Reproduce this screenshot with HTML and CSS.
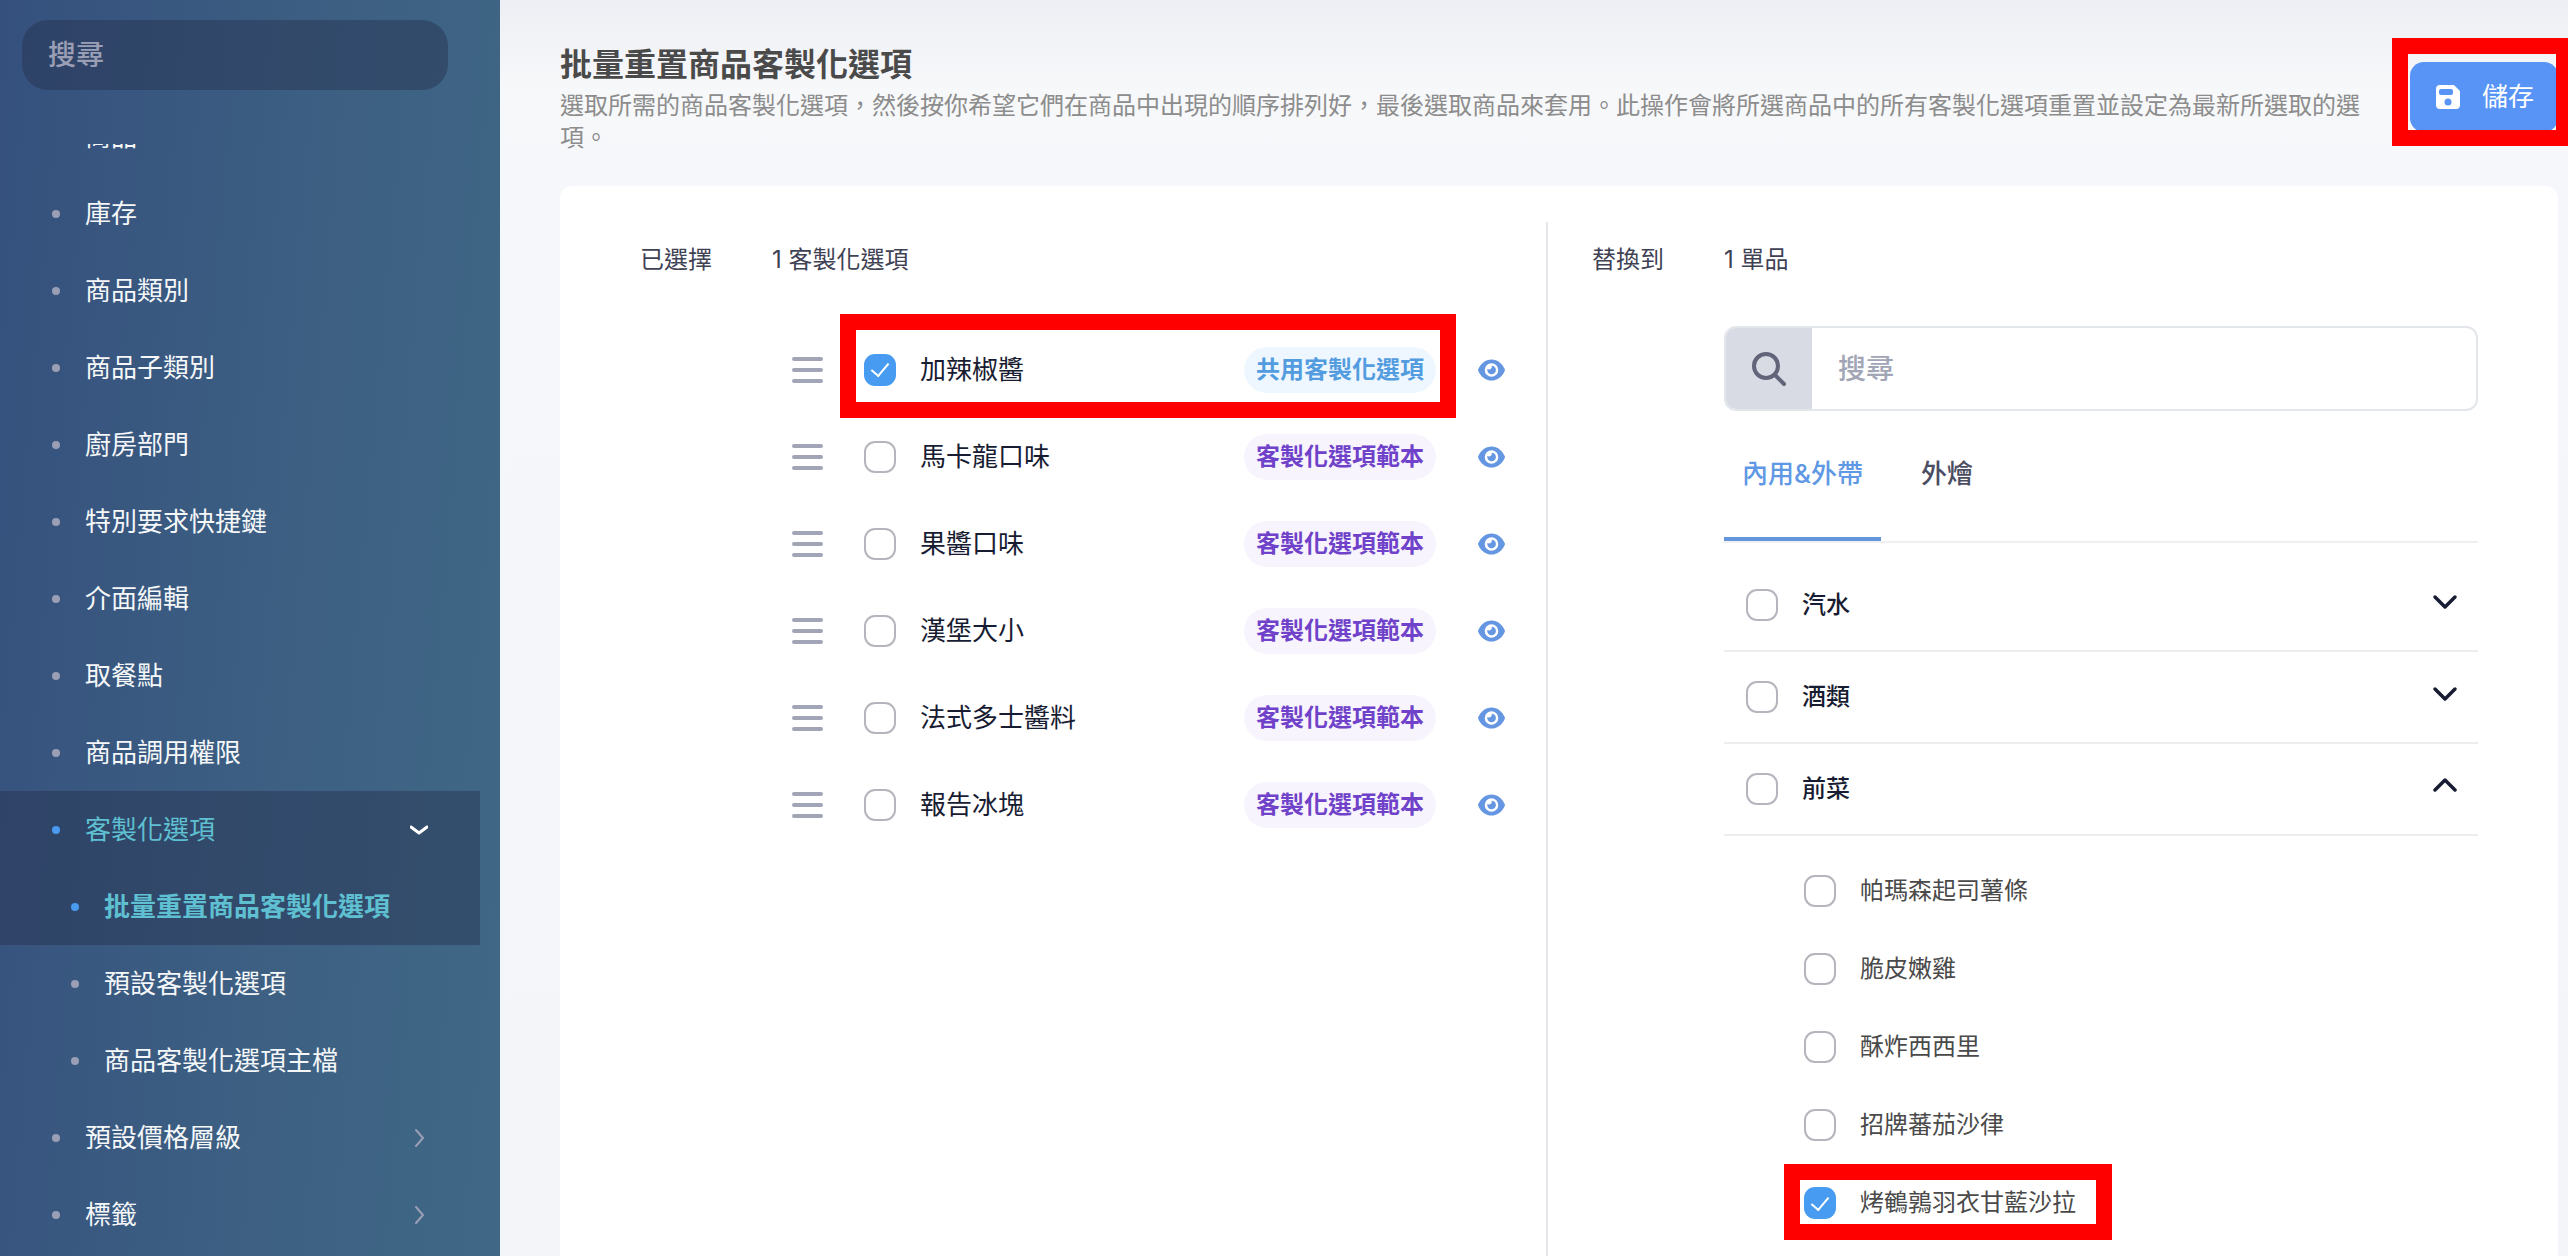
FILE: index.html
```html
<!DOCTYPE html>
<html lang="zh-Hant">
<head>
<meta charset="utf-8">
<meta name="viewport" content="width=device-width, initial-scale=1">
<title>批量重置商品客製化選項</title>
<link rel="stylesheet" href="styles.css">
</head>
<body>
<svg class="sprite" aria-hidden="true">
  <symbol id="eye" viewBox="0 0 27 22"><path fill-rule="evenodd" d="M13.500 0.500C7.500 0.500 2.600 4.700 0.300 10.100a2 2 0 0 0 0 1.800C2.600 17.300 7.500 21.500 13.500 21.500s10.900-4.200 13.200-9.600a2 2 0 0 0 0-1.800C24.400 4.700 19.500 0.500 13.500 0.500zM13.500 4.200a6.800 6.800 0 1 1 0 13.600a6.800 6.800 0 0 1 0-13.600zM13.500 6.700c.5.900.4 2-.3 2.800c-.9 1-2.600 1.300-3.800.6a4.300 4.300 0 1 0 4.100-3.400z"/></symbol>
  <symbol id="grip" viewBox="0 0 31 26"><path d="M2 2h27M2 13h27M2 24h27" fill="none" stroke="currentColor" stroke-width="4" stroke-linecap="round"/></symbol>
  <symbol id="down" viewBox="0 0 26 16"><path d="M3 3l10 10L23 3" fill="none" stroke="currentColor" stroke-width="3.500" stroke-linecap="round" stroke-linejoin="round"/></symbol>
  <symbol id="up" viewBox="0 0 26 16"><path d="M3 12L13 2l10 10" fill="none" stroke="currentColor" stroke-width="3.500" stroke-linecap="round" stroke-linejoin="round"/></symbol>
  <symbol id="next" viewBox="0 0 18 20"><path d="M6 2l7 8-7 8" fill="none" stroke="currentColor" stroke-width="2" stroke-linecap="round" stroke-linejoin="round"/></symbol>
</svg>
<div class="app">
  <aside class="sidebar">
    <input class="sidebar-search" type="search" placeholder="搜尋" aria-label="搜尋選單">
    <nav class="nav">
      <ul class="nav-list">
        <li><a class="nav-item" href="#">商品</a></li>
        <li><a class="nav-item" href="#">庫存</a></li>
        <li><a class="nav-item" href="#">商品類別</a></li>
        <li><a class="nav-item" href="#">商品子類別</a></li>
        <li><a class="nav-item" href="#">廚房部門</a></li>
        <li><a class="nav-item" href="#">特別要求快捷鍵</a></li>
        <li><a class="nav-item" href="#">介面編輯</a></li>
        <li><a class="nav-item" href="#">取餐點</a></li>
        <li><a class="nav-item" href="#">商品調用權限</a></li>
        <li>
          <a class="nav-item active" href="#">客製化選項<svg class="nav-arrow open" viewBox="0 0 18 20"><path d="M1 7l8 6 8-6" fill="none" stroke="currentColor" stroke-width="3" stroke-linecap="round" stroke-linejoin="round"/></svg></a>
          <ul class="nav-sub">
            <li><a class="nav-item sub active current" href="#">批量重置商品客製化選項</a></li>
            <li><a class="nav-item sub" href="#">預設客製化選項</a></li>
            <li><a class="nav-item sub" href="#">商品客製化選項主檔</a></li>
          </ul>
        </li>
        <li><a class="nav-item" href="#">預設價格層級<svg class="nav-arrow"><use href="#next"/></svg></a></li>
        <li><a class="nav-item" href="#">標籤<svg class="nav-arrow"><use href="#next"/></svg></a></li>
      </ul>
    </nav>
  </aside>

  <main class="main">
    <header class="page-head">
      <div class="page-intro">
        <h1>批量重置商品客製化選項</h1>
        <p>選取所需的商品客製化選項，然後按你希望它們在商品中出現的順序排列好，最後選取商品來套用。此操作會將所選商品中的所有客製化選項重置並設定為最新所選取的選項。</p>
      </div>
      <div class="marked mark-save">
        <button class="save" type="button">
          <svg viewBox="0 0 24 24"><path fill-rule="evenodd" d="M4 0h14l6 6v14a4 4 0 0 1-4 4H4a4 4 0 0 1-4-4V4a4 4 0 0 1 4-4zM5 4a2 2 0 0 0-2 2v2a2 2 0 0 0 2 2h10a2 2 0 0 0 2-2V6a2 2 0 0 0-2-2zM12 13.500a3.500 3.500 0 1 0 0 7a3.500 3.500 0 0 0 0-7z"/></svg>儲存
        </button>
      </div>
    </header>

    <div class="card">
      <section class="panel">
        <h2>已選擇</h2>
        <p class="count">1 客製化選項</p>
        <ul class="options">
          <li><svg class="grip"><use href="#grip"/></svg><div class="pick marked mark-option"><label><input type="checkbox" checked>加辣椒醬</label><span class="tag shared">共用客製化選項</span></div><button class="view" type="button" aria-label="檢視"><svg><use href="#eye"/></svg></button></li>
          <li><svg class="grip"><use href="#grip"/></svg><div class="pick"><label><input type="checkbox">馬卡龍口味</label><span class="tag">客製化選項範本</span></div><button class="view" type="button" aria-label="檢視"><svg><use href="#eye"/></svg></button></li>
          <li><svg class="grip"><use href="#grip"/></svg><div class="pick"><label><input type="checkbox">果醬口味</label><span class="tag">客製化選項範本</span></div><button class="view" type="button" aria-label="檢視"><svg><use href="#eye"/></svg></button></li>
          <li><svg class="grip"><use href="#grip"/></svg><div class="pick"><label><input type="checkbox">漢堡大小</label><span class="tag">客製化選項範本</span></div><button class="view" type="button" aria-label="檢視"><svg><use href="#eye"/></svg></button></li>
          <li><svg class="grip"><use href="#grip"/></svg><div class="pick"><label><input type="checkbox">法式多士醬料</label><span class="tag">客製化選項範本</span></div><button class="view" type="button" aria-label="檢視"><svg><use href="#eye"/></svg></button></li>
          <li><svg class="grip"><use href="#grip"/></svg><div class="pick"><label><input type="checkbox">報告冰塊</label><span class="tag">客製化選項範本</span></div><button class="view" type="button" aria-label="檢視"><svg><use href="#eye"/></svg></button></li>
        </ul>
      </section>

      <section class="panel target">
        <h2>替換到</h2>
        <p class="count">1 單品</p>
        <div class="products">
          <label class="search">
            <span class="search-icon"><svg viewBox="0 0 36 36"><circle cx="15" cy="15" r="12" fill="none" stroke="currentColor" stroke-width="4"/><path d="M24 24l9 9" fill="none" stroke="currentColor" stroke-width="4" stroke-linecap="round"/></svg></span>
            <input type="search" placeholder="搜尋" aria-label="搜尋商品">
          </label>
          <div class="tabs" role="tablist">
            <button class="tab selected" type="button" role="tab" aria-selected="true">內用&amp;外帶</button>
            <button class="tab" type="button" role="tab" aria-selected="false">外燴</button>
          </div>
          <div class="groups">
            <div class="group"><label><input type="checkbox">汽水</label><button type="button" aria-label="展開"><svg><use href="#down"/></svg></button></div>
            <div class="group"><label><input type="checkbox">酒類</label><button type="button" aria-label="展開"><svg><use href="#down"/></svg></button></div>
            <div class="group"><label><input type="checkbox">前菜</label><button type="button" aria-label="收合"><svg><use href="#up"/></svg></button></div>
          </div>
          <ul class="items">
            <li><label><input type="checkbox">帕瑪森起司薯條</label></li>
            <li><label><input type="checkbox">脆皮嫩雞</label></li>
            <li><label><input type="checkbox">酥炸西西里</label></li>
            <li><label><input type="checkbox">招牌蕃茄沙律</label></li>
            <li><label class="marked mark-item"><input type="checkbox" checked>烤鵪鶉羽衣甘藍沙拉</label></li>
          </ul>
        </div>
      </section>
    </div>
  </main>
</div>
</body>
</html>
```
FILE: styles.css
```css
* { box-sizing: border-box; margin: 0; padding: 0; }

body {
  font-family: Inter, "Noto Sans CJK TC", sans-serif;
  font-size: 24px;
  line-height: 32px;
  color: #3f4254;
  background: #f6f7fa;
}

ul { list-style: none; }
a { color: inherit; text-decoration: none; }
button, input { font: inherit; color: inherit; border: 0; background: none; outline: 0; }
.sprite { display: none; }

.app { display: flex; height: 100vh; overflow: hidden; }

/* Sidebar */
.sidebar {
  flex: 0 0 500px;
  min-width: 0;
  display: flex;
  flex-direction: column;
  padding-top: 20px;
  background: linear-gradient(95deg, #35507d, #3c5e82 50%, #406886);
}
.sidebar-search {
  flex: none;
  min-width: 0;
  height: 70px;
  margin: 0 52px 54px 22px;
  padding: 0 26px;
  border-radius: 26px;
  font-size: 28px;
  font-weight: 500;
  color: #f3f5f8;
  background: rgba(38, 49, 78, .45);
}
.sidebar-search::placeholder { color: #9a9fb6; }
.nav { flex: 1; min-height: 0; overflow: hidden; }
/* scrolled part of the menu */
.nav-list { margin-top: -46px; }
.nav-item {
  display: flex;
  align-items: center;
  height: 77px;
  margin-right: 20px;
  padding: 0 52px;
  font-size: 26px;
  color: #f5f7f9;
}
.nav-item::before {
  content: "";
  width: 8px;
  height: 8px;
  margin-right: 25px;
  border-radius: 50%;
  background: #9a9fb5;
}
.nav-item.sub { padding-left: 71px; }
.nav-item.active { color: #5fc0d2; background: rgba(38, 49, 78, .45); }
.nav-item.active::before { background: #4a9af0; }
.nav-item.current { font-weight: 600; }
.nav-arrow { width: 18px; height: 20px; margin-left: auto; color: #9a9fb5; }
.nav-arrow.open { color: #fff; }

/* Page */
.main {
  flex: 1;
  min-width: 0;
  display: flex;
  flex-direction: column;
  padding: 45px 10px 0 60px;
  background: linear-gradient(#eeeff4, #f7f8fa 90px, #f6f7fa 190px, #f4f5f8);
}
.page-head { display: flex; align-items: flex-start; gap: 30px; margin-bottom: 32px; }
.page-intro { flex: 1; }
h1 { font-size: 32px; line-height: 40px; font-weight: 600; color: #4a4a4a; margin-bottom: 5px; }
.page-intro p { color: #8c8c8c; }
.save {
  display: flex;
  align-items: center;
  gap: 22px;
  height: 70px;
  padding: 0 24px 0 26px;
  border-radius: 14px;
  font-size: 26px;
  color: #fff;
  background: #5794f6;
}
.save svg { width: 24px; height: 24px; fill: #fff; }

/* Red call-out frames */
.marked { position: relative; }
.marked::after { content: ""; position: absolute; border: 16px solid #f00; pointer-events: none; }
.mark-save { margin-top: 17px; }
.mark-save::after { inset: -24px -14px -14px -18px; }
.mark-option::after { inset: -33px -20px -25px -24px; }
.mark-item::after { inset: -23px -36px -21px -20px; }

.card {
  flex: 1;
  display: grid;
  grid-template-columns: 986fr 1012fr;
  padding-top: 36px;
  border-radius: 12px 12px 0 0;
  background: #fff;
}
.panel {
  display: grid;
  grid-template: auto 1fr / 132px 1fr;
  row-gap: 50px;
  padding: 22px 41px 0 80px;
}
.target { padding: 22px 80px 0 44px; border-left: 2px solid #e6e7eb; }
h2, .count { font-size: 24px; font-weight: 400; }
.options, .products { grid-column: 2; }

input[type="checkbox"] {
  appearance: none;
  display: grid;
  place-items: center;
  flex: none;
  width: 32px;
  height: 32px;
  border: 2px solid #b5b5be;
  border-radius: 11px;
  background: #fff;
}
input[type="checkbox"]:checked { border-color: #479bf0; background: #479bf0; }
input[type="checkbox"]:checked::before {
  content: "";
  width: 8px;
  height: 15px;
  margin-bottom: 4px;
  border: solid #fff;
  border-width: 0 2px 2px 0;
  transform: rotate(40deg);
}
label { display: flex; align-items: center; gap: 24px; }

/* Customisation options */
.options li { display: flex; align-items: center; height: 87px; padding-left: 20px; }
.grip { width: 31px; height: 26px; margin-right: 41px; color: #a1a5b5; }
.pick { flex: 1; display: flex; align-items: center; justify-content: space-between; }
.pick label { font-size: 26px; color: #181c32; }
.tag {
  padding: 7px 12px;
  border-radius: 23px;
  font-weight: 600;
  color: #6f42c9;
  background: #f7f4fe;
}
.tag.shared { color: #549ce0; background: #eef7ff; }
.view { display: flex; margin-left: 42px; }
.view svg { width: 27px; height: 22px; fill: #6496e2; }

/* Products */
.search {
  gap: 0;
  height: 85px;
  border: 2px solid #e3e6ea;
  border-radius: 12px;
  overflow: hidden;
}
.search-icon {
  display: grid;
  place-items: center;
  width: 86px;
  height: 100%;
  color: #62657a;
  background: #d8dbe3;
}
.search-icon svg { width: 36px; height: 36px; }
.search input { flex: 1; min-width: 0; height: 100%; padding: 0 26px; font-size: 28px; font-weight: 500; }
.search input::placeholder { color: #a1a5b5; }
.tabs { display: flex; gap: 22px; height: 132px; border-bottom: 2px solid #eff0f2; }
.tab { padding: 0 18px 4px; font-size: 26px; font-weight: 500; color: #4b4d62; }
.tab.selected { padding-bottom: 0; border-bottom: 4px solid #6496de; color: #5f98e4; }
.groups { padding-top: 17px; }
.group {
  display: flex;
  align-items: center;
  justify-content: space-between;
  height: 92px;
  padding: 0 20px 0 22px;
  border-bottom: 2px solid #eceded;
}
.group label { font-weight: 500; color: #181c32; }
.group button { display: flex; padding-bottom: 6px; }
.group svg { width: 26px; height: 16px; color: #181c32; }
.items { padding: 16px 0 0 80px; }
.items li { display: flex; align-items: center; height: 78px; }
.items label { color: #4a4a4a; }
```
